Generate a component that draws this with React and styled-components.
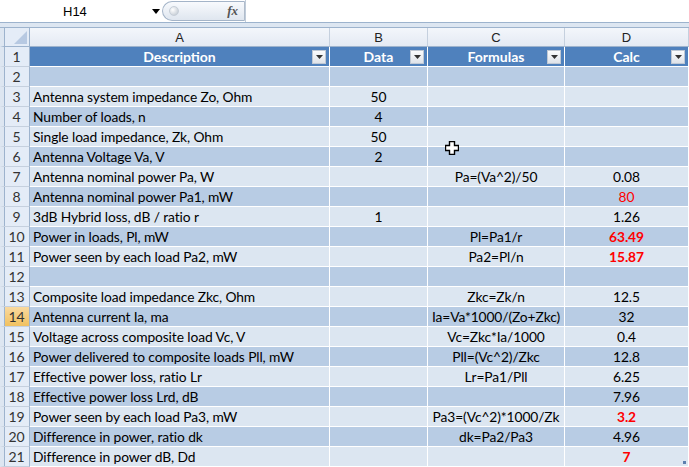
import React from "react";
import styled, { createGlobalStyle } from "styled-components";

const GlobalStyle = createGlobalStyle`
  html, body {
    margin: 0;
    padding: 0;
    background: #ffffff;
  }
  body {
    width: 689px;
    height: 467px;
    overflow: hidden;
    font-family: "Lato", "Liberation Sans", sans-serif;
  }
`;

const COLS = "30px 300px 98px 137px 1fr";

const rows = [
  { a: "", b: "", c: "", d: "" },
  { a: "Antenna system impedance Zo, Ohm", b: "50", c: "", d: "" },
  { a: "Number of loads, n", b: "4", c: "", d: "" },
  { a: "Single load impedance, Zk, Ohm", b: "50", c: "", d: "" },
  { a: "Antenna Voltage Va, V", b: "2", c: "", d: "" },
  { a: "Antenna nominal power Pa, W", b: "", c: "Pa=(Va^2)/50", d: "0.08" },
  { a: "Antenna nominal power Pa1, mW", b: "", c: "", d: "80", tone: "red" },
  { a: "3dB Hybrid loss, dB / ratio r", b: "1", c: "", d: "1.26" },
  { a: "Power in loads, Pl, mW", b: "", c: "Pl=Pa1/r", d: "63.49", tone: "bold" },
  { a: "Power seen by each load Pa2, mW", b: "", c: "Pa2=Pl/n", d: "15.87", tone: "bold" },
  { a: "", b: "", c: "", d: "" },
  { a: "Composite load impedance Zkc, Ohm", b: "", c: "Zkc=Zk/n", d: "12.5" },
  { a: "Antenna current Ia, ma", b: "", c: "Ia=Va*1000/(Zo+Zkc)", d: "32" },
  { a: "Voltage across composite load Vc, V", b: "", c: "Vc=Zkc*Ia/1000", d: "0.4" },
  { a: "Power delivered to composite loads Pll, mW", b: "", c: "Pll=(Vc^2)/Zkc", d: "12.8" },
  { a: "Effective power loss, ratio Lr", b: "", c: "Lr=Pa1/Pll", d: "6.25" },
  { a: "Effective power loss Lrd, dB", b: "", c: "", d: "7.96" },
  { a: "Power seen by each load Pa3, mW", b: "", c: "Pa3=(Vc^2)*1000/Zk", d: "3.2", tone: "bold" },
  { a: "Difference in power, ratio dk", b: "", c: "dk=Pa2/Pa3", d: "4.96" },
  { a: "Difference in power dB, Dd", b: "", c: "", d: "7", tone: "bold" },
];

const FilterButton = () => (
  <FilterBtn>
    <svg width="7" height="4" viewBox="0 0 7 4">
      <path d="M0 0 L7 0 L3.5 4 Z" fill="#333" />
    </svg>
  </FilterBtn>
);

const CrossCursor = () => (
  <CursorBox>
    <svg width="14" height="14" viewBox="0 0 14 14">
      <path
        d="M4.5 0.5 H9.5 V4.5 H13.5 V9.5 H9.5 V13.5 H4.5 V9.5 H0.5 V4.5 H4.5 Z"
        fill="#fff"
        stroke="#000"
        strokeWidth="1.4"
      />
    </svg>
  </CursorBox>
);

const App = () => {
  return (
    <>
      <GlobalStyle />
      <Page>
        <FormulaBar>
          <NameBox>
            <NameText>H14</NameText>
            <svg width="8" height="5" viewBox="0 0 8 5">
              <path d="M0 0 L8 0 L4 5 Z" fill="#000" />
            </svg>
          </NameBox>
          <Pill>
            <Knob />
            <Fx>fx</Fx>
          </Pill>
          <FormulaInput />
        </FormulaBar>
        <Gap />
        <Sheet>
          <CrossCursor />
          <Row>
            <Corner>
              <svg width="13" height="13" viewBox="0 0 13 13">
                <path d="M13 0 L13 13 L0 13 Z" fill="#b7c9e2" />
              </svg>
            </Corner>
            <ColHead>A</ColHead>
            <ColHead>B</ColHead>
            <ColHead>C</ColHead>
            <ColHead>D</ColHead>
          </Row>
          <Row>
            <RowNum>1</RowNum>
            <HeadCell>
              Description
              <FilterButton />
            </HeadCell>
            <HeadCell>
              Data
              <FilterButton />
            </HeadCell>
            <HeadCell>
              Formulas
              <FilterButton />
            </HeadCell>
            <HeadCell>
              Calc
              <FilterButton />
            </HeadCell>
          </Row>
          {rows.map((r, i) => {
            const n = i + 2;
            const dark = n % 2 === 0;
            return (
              <Row key={n}>
                <RowNum $active={n === 14}>{n}</RowNum>
                <Cell $dark={dark}>{r.a}</Cell>
                <Cell $dark={dark} $center>
                  {r.b}
                </Cell>
                <Cell $dark={dark} $center>
                  {r.c}
                </Cell>
                <Cell $dark={dark} $center $tone={r.tone}>
                  {r.d}
                </Cell>
              </Row>
            );
          })}
          <Grip />
        </Sheet>
      </Page>
    </>
  );
};

const Page = styled.div`
  width: 689px;
  height: 467px;
  display: flex;
  flex-direction: column;
  overflow: hidden;
  background: #ffffff;
`;

const FormulaBar = styled.div`
  height: 22px;
  display: flex;
  align-items: stretch;
  border-bottom: 1px solid #9db3cd;
  background: #ffffff;
`;

const NameBox = styled.div`
  width: 160px;
  display: flex;
  align-items: center;
  padding-left: 63px;
  gap: 64px;
  font-family: "Liberation Sans", Arial, sans-serif;
  font-size: 13px;
  color: #000;
  box-sizing: border-box;
`;

const NameText = styled.span`
  width: 25px;
`;

const Pill = styled.div`
  width: 83px;
  margin: 1px 0 1px 2px;
  border: 1px solid #a4b4c8;
  border-right: 1px solid #b0bccb;
  border-radius: 10px 0 0 10px;
  background: linear-gradient(#f8fafd, #dfe6ef);
  display: flex;
  align-items: center;
  justify-content: space-between;
  padding: 0 6px 0 6px;
  box-sizing: border-box;
`;

const Knob = styled.div`
  width: 8px;
  height: 8px;
  border-radius: 50%;
  background: radial-gradient(circle at 35% 35%, #ffffff, #b9c2cc);
  border: 1px solid #c6ced8;
`;

const Fx = styled.span`
  font-family: "Liberation Serif", "Times New Roman", serif;
  font-style: italic;
  font-weight: bold;
  font-size: 13px;
  color: #555;
`;

const FormulaInput = styled.div`
  flex: 1;
  border-left: 1px solid #c0ccda;
  background: #ffffff;
`;

const Gap = styled.div`
  height: 4px;
  background: #dde6f1;
  border-bottom: 1px solid #9db3cd;
`;

const Sheet = styled.div`
  position: relative;
  display: flex;
  flex-direction: column;
`;

const Row = styled.div`
  display: grid;
  grid-template-columns: ${COLS};
`;

const Corner = styled.div`
  height: 19px;
  box-sizing: border-box;
  border-left: 4px solid #dde6f1;
  box-shadow: inset 1px 0 0 #9db3cd;
  background: #e4ecf7;
  border-right: 1px solid #9db3cd;
  border-bottom: 1px solid #9db3cd;
  display: flex;
  align-items: flex-end;
  justify-content: flex-end;
  padding: 0 2px 2px 0;
`;

const ColHead = styled.div`
  height: 19px;
  box-sizing: border-box;
  background: linear-gradient(#f3f6fb, #e4eaf3);
  border-right: 1px solid #c5d0de;
  border-bottom: 1px solid #9db3cd;
  font-family: "Liberation Sans", Arial, sans-serif;
  font-size: 13px;
  color: #222;
  display: flex;
  align-items: center;
  justify-content: center;
`;

const RowNum = styled.div`
  height: 20px;
  box-sizing: border-box;
  border-left: 4px solid #dde6f1;
  box-shadow: inset 1px 0 0 #9db3cd;
  background: ${({ $active }) =>
    $active ? "linear-gradient(#f9d99f, #f1c15f)" : "#e4ecf7"};
  border-right: 1px solid #9db3cd;
  border-bottom: 1px solid #c5d0de;
  font-family: "Lato", "Liberation Sans", sans-serif;
  font-size: 14px;
  color: #333;
  display: flex;
  align-items: center;
  justify-content: center;
`;

const HeadCell = styled.div`
  position: relative;
  height: 20px;
  box-sizing: border-box;
  background: #4f81bd;
  border-right: 1px solid #ffffff;
  border-bottom: 1px solid #ffffff;
  color: #ffffff;
  font-weight: bold;
  font-size: 14px;
  display: flex;
  align-items: center;
  justify-content: center;
`;

const FilterBtn = styled.div`
  position: absolute;
  right: 3px;
  top: 3px;
  width: 14px;
  height: 14px;
  box-sizing: border-box;
  border: 1px solid #bfc8d4;
  background: linear-gradient(#fbfcfd, #dfe3e9);
  display: flex;
  align-items: center;
  justify-content: center;
`;

const Cell = styled.div`
  height: 20px;
  box-sizing: border-box;
  background: ${({ $dark }) => ($dark ? "#b8cce4" : "#dce6f1")};
  border-right: 1px solid #ffffff;
  border-bottom: 1px solid #ffffff;
  padding: 0 3px;
  font-size: 13.8px;
  letter-spacing: -0.1px;
  white-space: nowrap;
  overflow: hidden;
  display: flex;
  align-items: center;
  justify-content: ${({ $center }) => ($center ? "center" : "flex-start")};
  color: ${({ $tone }) => ($tone ? "#ff0000" : "#000000")};
  font-weight: ${({ $tone }) => ($tone === "bold" ? "bold" : "normal")};
`;

const CursorBox = styled.div`
  position: absolute;
  left: 445px;
  top: 111px;
  width: 14px;
  height: 14px;
  pointer-events: none;
`;

const Grip = styled.div`
  position: absolute;
  right: 3px;
  bottom: 3px;
  width: 3px;
  height: 3px;
  background: #5b7fae;
`;

export default App;
